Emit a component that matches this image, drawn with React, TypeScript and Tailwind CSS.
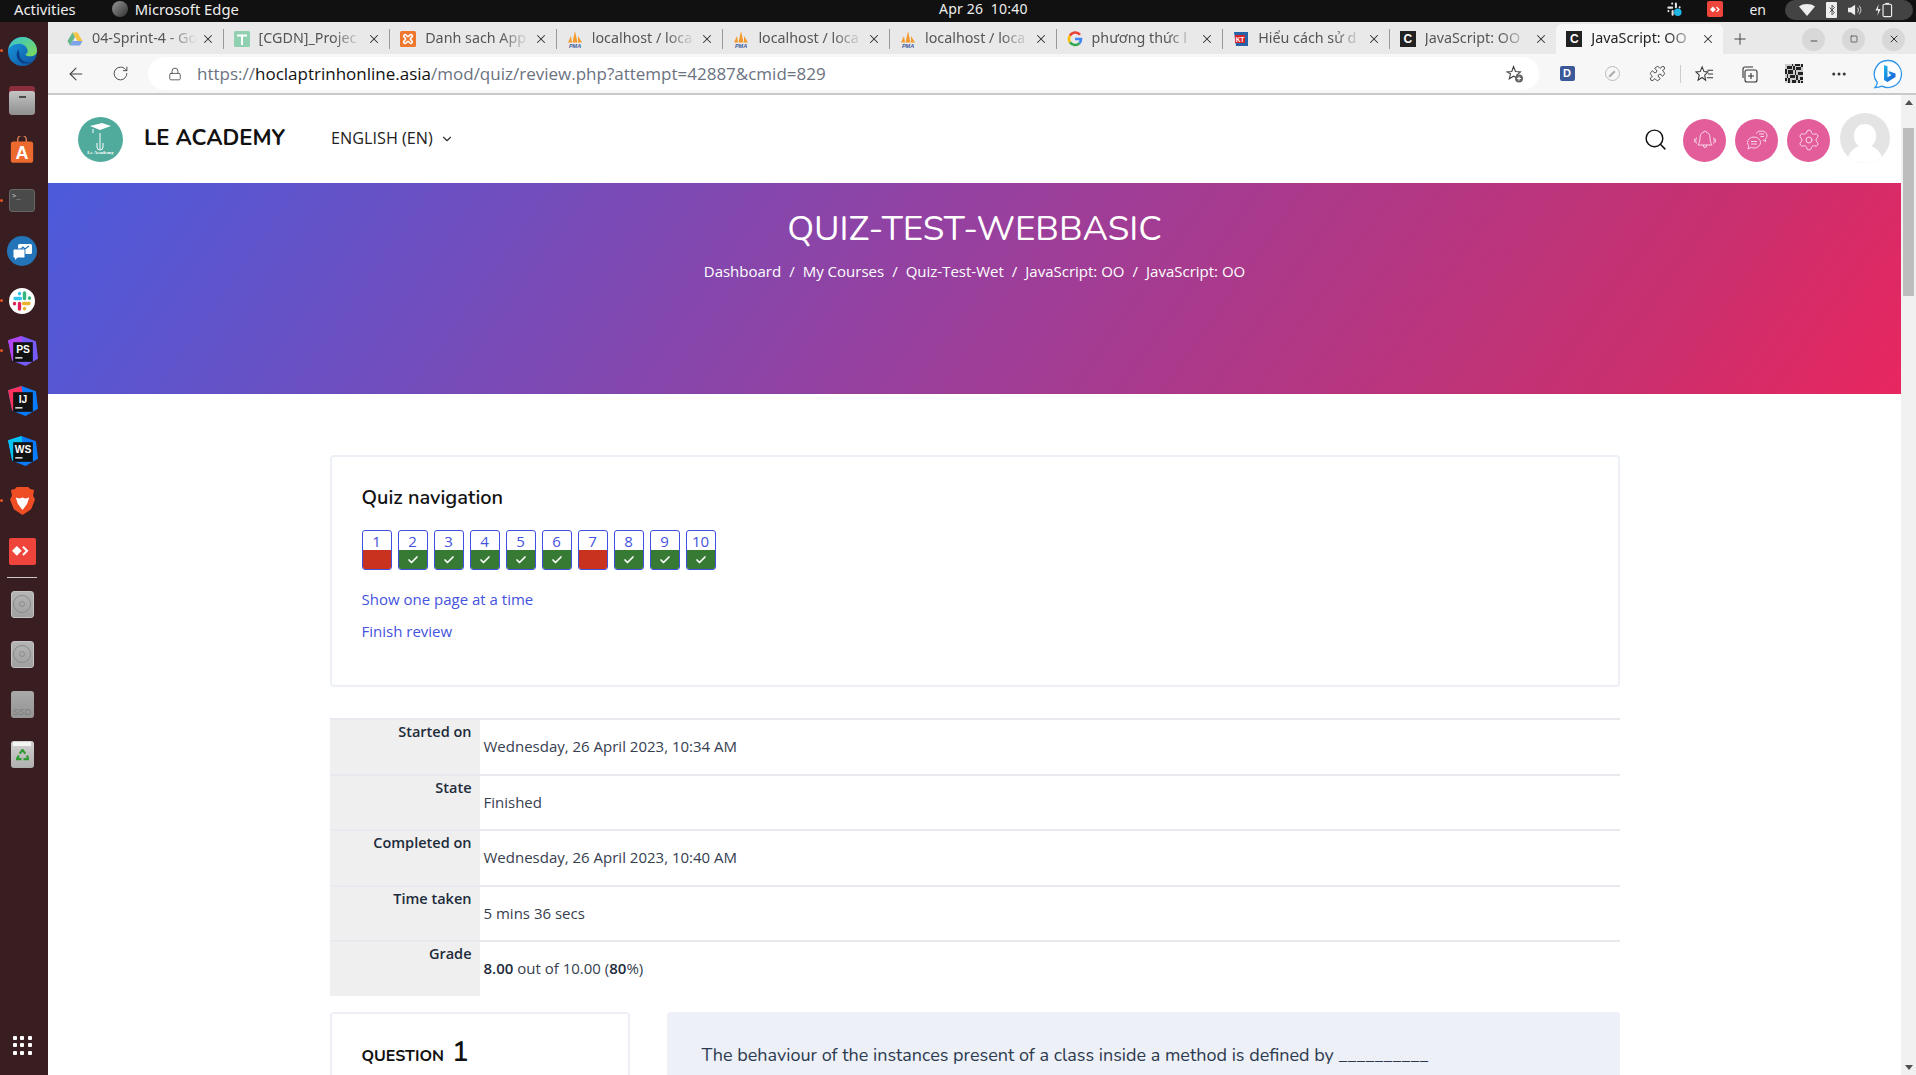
import {
  ArrowLeft,
  Check,
  ChevronDown,
  Ellipsis,
  Lock,
  Minus,
  Plus,
  Puzzle,
  RotateCw,
  Search,
  Settings,
  Square,
  X,
} from "lucide-react";
import type { ReactNode } from "react";

const heading = "font-['Nunito','Lato','Noto_Sans',sans-serif]";

/* ---------- favicons ---------- */
function DriveIcon() {
  return (
    <svg viewBox="0 0 16 16" className="w-4 h-4">
      <path d="M5.500 1.500h5L15.500 10h-5z" fill="#f4c542" />
      <path d="M5.500 1.500 0.500 10l2.500 4.500L8 6z" fill="#63b58a" />
      <path d="M3 14.500h10l2.500-4.500h-10z" fill="#7ba4ea" />
    </svg>
  );
}
function SheetIcon() {
  return (
    <svg viewBox="0 0 16 16" className="w-4 h-4">
      <rect x="0" y="0" width="16" height="16" rx="1.500" fill="#8fd0b0" />
      <path d="M3 4.500h10M8 4.500V14" stroke="#fff" strokeWidth="2" />
    </svg>
  );
}
function XamppIcon() {
  return (
    <svg viewBox="0 0 16 16" className="w-4 h-4" fill="none" stroke="#fff" strokeWidth="1.600">
      <rect width="16" height="16" rx="1.500" fill="#f0782e" stroke="none" />
      <path d="M5 3.500c1.500 0 1.500 2 3 2s1.500-2 3-2 2 2 .5 3-1.500 2 0 3 .5 3-.5 3-1.500-2-3-2-1.500 2-3 2-2-2-.5-3 1.500-2 0-3-.5-3 .5-3z" />
    </svg>
  );
}
function PmaIcon() {
  return (
    <svg viewBox="0 0 18 17" className="w-[18px] h-[17px]">
      <path d="M2 11.500 5 5l1 6.500zM6.500 11.500 9 0l2.500 11.500zM12 11.500V5l4 6.500z" fill="#f39a2c" />
      <text x="9" y="16.500" textAnchor="middle" fontSize="5.500" fontWeight="700" fontStyle="italic" fill="#3c5a9a" fontFamily="Liberation Sans">
        PMA
      </text>
    </svg>
  );
}
function GoogleIcon() {
  return (
    <svg viewBox="0 0 16 16" className="w-4 h-4" fill="none" strokeWidth="2.600">
      <path d="M13 3.700A6 6 0 0 0 3 4.700" stroke="#ea4335" />
      <path d="M3 4.700a6 6 0 0 0 0 6.600" stroke="#fbbc05" />
      <path d="M3 11.300a6 6 0 0 0 9.500.8" stroke="#34a853" />
      <path d="M8 8h6c0 1.700-.5 3-1.500 4.100" stroke="#4285f4" />
    </svg>
  );
}
function KtIcon() {
  return (
    <svg viewBox="0 0 16 16" className="w-4 h-4">
      <path d="M1 1h14v14H3z" fill="#2563a8" />
      <rect x="2" y="4" width="10" height="8" fill="#d8232a" />
      <text x="7" y="10.500" textAnchor="middle" fontSize="6.500" fontWeight="700" fill="#fff" fontFamily="Liberation Sans">
        KT
      </text>
    </svg>
  );
}
function CIcon() {
  return (
    <div className="w-4 h-4 bg-[#222] flex items-center justify-center text-white text-[12px] font-bold font-['Liberation_Sans',sans-serif] leading-none">
      C
    </div>
  );
}

/* ---------- dock ---------- */
function EdgeIcon() {
  return (
    <svg viewBox="0 0 32 32" className="w-[31px] h-[31px]">
      <defs>
        <linearGradient id="edgeA" x1="0" y1="0" x2="1" y2="1">
          <stop offset="0" stopColor="#37c6d0" />
          <stop offset="1" stopColor="#7ed957" />
        </linearGradient>
        <linearGradient id="edgeB" x1="0" y1="0" x2="1" y2="1">
          <stop offset="0" stopColor="#1b9de2" />
          <stop offset="1" stopColor="#0b4f9e" />
        </linearGradient>
      </defs>
      <circle cx="16" cy="16" r="15" fill="url(#edgeB)" />
      <path d="M1.500 14C3 5 10 1 16 1c9 0 15 7 15 14 0 4-3 6-7 6-3 0-5-1-5-2 2-1 3-3 2-5-1-4-5-6-9-6-5 0-9 3-11 6z" fill="url(#edgeA)" />
      <path d="M12 14c-3 3-3 9 2 13 3 2 8 2 11 0-6 1-11-2-12-7-.5-2-.5-4-1-6z" fill="#0c3f86" />
    </svg>
  );
}
function FilesIcon() {
  return (
    <div className="w-[26px] h-[29px] -mt-[2px] rounded-[3px] bg-[#8a2e3e] pt-[5px] overflow-hidden">
      <div className="h-full rounded-[3px] bg-gradient-to-b from-[#c4c4c4] to-[#8f8f8f] flex justify-center pt-[5px]">
        <div className="w-[7px] h-[2px] bg-[#4a4a4a]" />
      </div>
    </div>
  );
}
function StoreIcon() {
  return (
    <svg viewBox="0 0 28 32" className="w-[24px] h-[28px] -mt-[3px]">
      <path d="M9 7V4a5 5 0 0 1 10 0v3" stroke="#f08a5a" strokeWidth="1.500" fill="none" />
      <rect x="1" y="6" width="26" height="25" rx="3" fill="#ec6a2d" />
      <text x="14" y="26" textAnchor="middle" fontSize="21" fontWeight="700" fill="#fff" fontFamily="Liberation Sans">
        A
      </text>
    </svg>
  );
}
function TerminalIcon() {
  return (
    <div className="w-[26px] h-[23px] -mt-[2px] rounded-[3px] bg-[#4a4a4a] border border-[#666] text-[#ccc] text-[7px] leading-[9px] pl-[2px] pt-[2px] font-['DejaVu_Sans_Mono',monospace]">
      &gt;_
    </div>
  );
}
function MessengerIcon() {
  return (
    <svg viewBox="0 0 30 30" className="w-[30px] h-[30px]">
      <circle cx="15" cy="15" r="15" fill="#2374b8" />
      <rect x="11" y="8" width="14" height="10" rx="1.500" fill="#fff" />
      <path d="M13 14l3-3 2 2 4-3" stroke="#2374b8" strokeWidth="1.200" fill="none" />
      <rect x="6" y="13" width="12" height="9" rx="1.500" fill="#fff" stroke="#2374b8" />
      <path d="M8 21v3l3-3z" fill="#fff" />
    </svg>
  );
}
function SlackIcon() {
  return (
    <svg viewBox="0 0 26 26" className="w-[26px] h-[26px]">
      <circle cx="13" cy="13" r="13" fill="#fff" />
      <g strokeWidth="3.400" strokeLinecap="round">
        <path d="M6 10.500h5.500M10.500 5.500v.2" stroke="#36c5f0" />
        <path d="M15.500 5v5.500M20.500 10v.2" stroke="#2eb67d" />
        <path d="M14.500 15.500H20M15.500 20.500v.2" stroke="#ecb22e" />
        <path d="M10.500 15.500V21M5.500 15.500v.2" stroke="#e01e5a" />
      </g>
    </svg>
  );
}
function StatusSlackIcon() {
  return (
    <svg viewBox="0 0 16 16" className="w-[15px] h-[15px]">
      <g stroke="#e4e4e4" strokeWidth="2.200" strokeLinecap="round">
        <path d="M1.500 6h4M5.500 1.500v.2M9.500 1.500v4M13.500 5.500v.2M6 9.500v4M1.500 9.500v.2" />
      </g>
      <circle cx="11.500" cy="11" r="4" fill="#1fb6e6" />
    </svg>
  );
}
function JetBrainsIcon({ label, polyA, polyB }: { label: string; polyA: string; polyB: string }) {
  return (
    <svg viewBox="0 0 30 30" className="w-[31px] h-[31px]">
      <path d="M1 4 14 0 28 5 30 22 18 29 5 24z" fill={polyB} />
      <path d="M1 4 14 0 16 14 5 24z" fill={polyA} />
      <rect x="6" y="6" width="19" height="19" fill="#111" />
      <text x="15.500" y="16.500" textAnchor="middle" fontSize="10" fontWeight="700" fill="#fff" fontFamily="Liberation Sans">
        {label}
      </text>
      <rect x="8" y="20.500" width="7" height="1.300" fill="#fff" />
    </svg>
  );
}
function BraveIcon() {
  return (
    <svg viewBox="0 0 26 30" className="w-[25px] h-[29px] -mt-[1px]">
      <path d="M7 1h12l2 2 4 1-1 6 2 4-4 10-9 6-9-6L0 14l2-4-1-6 4-1z" fill="#ef4d23" />
      <path d="M6 12l4 1 3-1 3 1 4-1-2 6-2 3-3 4-3-4-2-3z" fill="#fff" />
    </svg>
  );
}
function AnydeskIcon({ size }: { size: string }) {
  return (
    <div className={`${size} rounded-[2px] bg-[#ef443b] flex items-center justify-center`}>
      <svg viewBox="0 0 20 12" className="w-[72%]">
        <path d="M0 6l5-5 5 5-5 5z" fill="#fff" />
        <path d="M12 1l5 5-5 5-1.500-1.500L14 6l-3.500-3.500z" fill="#fff" />
      </svg>
    </div>
  );
}
function DiskIcon() {
  return (
    <div className="w-[23px] h-[27px] rounded-[3px] bg-gradient-to-b from-[#b5b5b5] to-[#a0a0a0] border border-[#c4c4c4] flex items-center justify-center">
      <div className="w-[18px] h-[18px] rounded-full border border-[#8b8b8b] flex items-center justify-center">
        <div className="w-[6px] h-[6px] rounded-full border border-[#8b8b8b]" />
      </div>
    </div>
  );
}
function SsdIcon() {
  return (
    <div className="w-[23px] h-[27px] rounded-[3px] bg-gradient-to-b from-[#a9a9a9] to-[#959595] flex items-end justify-center text-[#7d7d7d] text-[9px] leading-[12px] font-['Liberation_Sans',sans-serif]">
      SSD
    </div>
  );
}
function TrashIcon() {
  return (
    <div className="w-[23px] h-[27px] rounded-[3px] bg-gradient-to-b from-[#d2d2d2] to-[#b0b0b0] flex flex-col items-center pt-[1px] gap-[3px]">
      <div className="w-[18px] h-[4px] bg-[#f4f4f4]" />
      <svg viewBox="0 0 14 14" className="w-[13px] h-[13px]" fill="none" stroke="#2f9a2f" strokeWidth="2.400">
        <path d="M4 5l3-4 3 4M12 7l1 4H8M6 11H1l2-4" />
      </svg>
    </div>
  );
}
function DockItem({ children, running }: { children: ReactNode; running?: boolean }) {
  return (
    <div className="relative h-[50px] w-[44px] flex items-center justify-center shrink-0">
      {running && <span className="absolute left-0 top-[23px] w-[3px] h-[3px] rounded-full bg-[#e95420]" />}
      {children}
    </div>
  );
}
function Dock() {
  return (
    <aside className="w-[48px] shrink-0 bg-[#391e21] flex flex-col pt-[4px]">
      <DockItem running><EdgeIcon /></DockItem>
      <DockItem><FilesIcon /></DockItem>
      <DockItem><StoreIcon /></DockItem>
      <DockItem running><TerminalIcon /></DockItem>
      <DockItem><MessengerIcon /></DockItem>
      <DockItem running><SlackIcon /></DockItem>
      <DockItem running><JetBrainsIcon label="PS" polyA="#b345f1" polyB="#765af8" /></DockItem>
      <DockItem><JetBrainsIcon label="IJ" polyA="#fe315d" polyB="#087cfa" /></DockItem>
      <DockItem><JetBrainsIcon label="WS" polyA="#07c3f2" polyB="#087cfa" /></DockItem>
      <DockItem running><BraveIcon /></DockItem>
      <DockItem><AnydeskIcon size="w-[27px] h-[27px]" /></DockItem>
      <div className="w-[30px] h-px bg-[#cfc8c8] ml-[7px] my-[1px] shrink-0" />
      <DockItem><DiskIcon /></DockItem>
      <DockItem><DiskIcon /></DockItem>
      <DockItem><SsdIcon /></DockItem>
      <DockItem><TrashIcon /></DockItem>
      <div className="mt-auto mb-[5px] h-[50px] w-[44px] flex items-center justify-center shrink-0">
        <div className="grid grid-cols-3 gap-[3.500px]">
          {Array.from({ length: 9 }).map((_, i) => (
            <div key={i} className="w-[4px] h-[4px] bg-white rounded-[1px]" />
          ))}
        </div>
      </div>
    </aside>
  );
}

/* ---------- top bar ---------- */
function TopBar() {
  return (
    <div className="h-[22px] shrink-0 bg-[#111] text-[#eee] text-[14.800px] font-['Noto_Sans',sans-serif] flex items-start relative">
      <span className="ml-[14px] leading-[19px]">Activities</span>
      <span className="ml-[36px] mt-[1px] w-[16px] h-[16px] rounded-full bg-gradient-to-br from-[#999] to-[#333]" />
      <span className="ml-[7px] leading-[19px]">Microsoft Edge</span>
      <span className="absolute left-[939px] top-0 text-[14px] leading-[18px] tracking-[0.2px]">Apr 26&nbsp; 10:40</span>
      <div className="ml-auto flex items-start">
        <div className="mt-[2px] mr-[25px]">
          <StatusSlackIcon />
        </div>
        <div className="mt-[1px]">
          <AnydeskIcon size="w-[16px] h-[16px]" />
        </div>
        <span className="ml-[26px] mr-[19px] text-[14px] leading-[19px]">en</span>
        <div className="w-[128px] h-[20px] rounded-full bg-[#434343] flex items-center pl-[14px] mr-[3px]">
          <svg viewBox="0 0 16 12" className="w-[16px] h-[12px]">
            <path d="M0 2.500C4-.8 12-.8 16 2.500L8 12z" fill="#eee" />
          </svg>
          <div className="ml-[11px] w-[11px] h-[16px] rounded-[1px] bg-[#eee] flex items-center justify-center">
            <svg viewBox="0 0 10 14" className="w-[8px] h-[12px]" fill="none" stroke="#333" strokeWidth="1">
              <path d="M2 4l6 6-3 3V1l3 3-6 6" />
            </svg>
          </div>
          <svg viewBox="0 0 18 14" className="ml-[11px] w-[16px] h-[14px]">
            <path d="M0 4.500h3L8 1v12L3 9.500H0z" fill="#eee" />
            <path d="M10.500 4.500a3 3 0 0 1 0 5M12.500 2.500a6 6 0 0 1 0 9" stroke="#bbb" strokeWidth="1.200" fill="none" />
          </svg>
          <svg viewBox="0 0 20 16" className="ml-[10px] w-[19px] h-[16px]" fill="none">
            <path d="M5 2 1.500 8.500h3L3.500 14l3.500-7H4z" fill="#eee" />
            <rect x="9.500" y="2" width="9" height="13" rx="1.500" stroke="#eee" strokeWidth="1.200" />
            <rect x="12" y="0.500" width="4" height="1.500" fill="#eee" />
          </svg>
        </div>
      </div>
    </div>
  );
}

/* ---------- browser tabs ---------- */
const tabs: { icon: ReactNode; title: string }[] = [
  { icon: <DriveIcon />, title: "04-Sprint-4 - Go" },
  { icon: <SheetIcon />, title: "[CGDN]_Projec" },
  { icon: <XamppIcon />, title: "Danh sach App" },
  { icon: <PmaIcon />, title: "localhost / loca" },
  { icon: <PmaIcon />, title: "localhost / loca" },
  { icon: <PmaIcon />, title: "localhost / loca" },
  { icon: <GoogleIcon />, title: "phương thức l" },
  { icon: <KtIcon />, title: "Hiểu cách sử d" },
  { icon: <CIcon />, title: "JavaScript: OO" },
];

function Tab({ icon, title, active, last }: { icon: ReactNode; title: string; active?: boolean; last?: boolean }) {
  return (
    <div
      className={`h-full w-[166.600px] shrink-0 flex items-center pl-[9px] pr-[8px] ${
        active
          ? "bg-[#f7f7f7] rounded-t-[6px] text-[#222]"
          : `text-[#555] ${last ? "" : "border-r border-[#b5b5b5] [border-image:linear-gradient(to_bottom,transparent_20%,#999_20%,#999_80%,transparent_80%)_1]"}`
      }`}
    >
      <span className="w-[18px] flex justify-center shrink-0">{icon}</span>
      <span className="ml-[8px] -mt-[2px] flex-1 min-w-0 overflow-hidden whitespace-nowrap text-[14.300px] [mask-image:linear-gradient(to_right,black_70%,transparent_98%)]">
        {title}
      </span>
      <X size={14} strokeWidth={1.800} className="shrink-0 ml-[2px] text-[#333]" />
    </div>
  );
}

function TabStrip() {
  return (
    <div className="h-[32px] shrink-0 bg-[#e9e9e9] flex items-stretch pl-[9px] pt-[2px] font-['Noto_Sans',sans-serif]">
      {tabs.map((t, i) => (
        <Tab key={i} icon={t.icon} title={t.title} last={i === 8} />
      ))}
      <Tab icon={<CIcon />} title="JavaScript: OO" active />
      <div className="w-[34px] flex items-center justify-center text-[#333]">
        <Plus size={18} strokeWidth={1.200} />
      </div>
      <div className="ml-auto flex items-center gap-[17px] pr-[11px]">
        <div className="w-[23px] h-[23px] rounded-full bg-[#d8d8d8] flex items-center justify-center text-[#333]">
          <Minus size={10} className="mt-[3px]" />
        </div>
        <div className="w-[23px] h-[23px] rounded-full bg-[#d8d8d8] flex items-center justify-center text-[#333]">
          <Square size={8} />
        </div>
        <div className="w-[23px] h-[23px] rounded-full bg-[#d8d8d8] flex items-center justify-center text-[#333]">
          <X size={12} />
        </div>
      </div>
    </div>
  );
}

/* ---------- toolbar ---------- */
function ToolBtn({ children }: { children: ReactNode }) {
  return <div className="w-[45px] flex items-center justify-center shrink-0">{children}</div>;
}

const qrCells = Array.from({ length: 132 }, (_, i) => (i * i * 7 + i * 13) % 17 > 6);

function Toolbar() {
  return (
    <div className="h-[41px] shrink-0 bg-[#f7f7f7] border-b-2 border-[#c9c9c9] flex items-center pl-[6px]">
      <div className="w-[44px] flex justify-center text-[#444]">
        <ArrowLeft size={20} strokeWidth={1.300} />
      </div>
      <div className="w-[44px] flex justify-center text-[#444]">
        <RotateCw size={17} strokeWidth={1.300} />
      </div>
      <div className="ml-[6px] w-[1391px] h-[33px] rounded-full bg-white flex items-center pl-[20px] pr-[15px] font-['Open_Sans',sans-serif] text-[17px] text-[#6b7280]">
        <Lock size={14} strokeWidth={1.400} className="text-[#444] shrink-0" />
        <span className="ml-[15px]">
          https://<span className="text-[#111]">hoclaptrinhonline.asia</span>/mod/quiz/review.php?attempt=42887&amp;cmid=829
        </span>
        <svg viewBox="0 0 18 18" className="ml-auto w-[18px] h-[18px]" fill="none" stroke="#444" strokeWidth="1.100">
          <path d="M7.500 1.500 9.500 6.500l5 .4-3.800 3.300 1 3-4.200-2-4.200 2.600 1.200-5L.8 6.900l5-.4z" />
          <circle cx="13" cy="13.500" r="4" fill="#666" stroke="none" />
          <path d="M13 11.500v4M11 13.500h4" stroke="#fff" />
        </svg>
      </div>
      <div className="flex items-center ml-[5.500px]">
        <ToolBtn>
          <div className="w-[15px] h-[15px] rounded-[2px] bg-[#3b5998] text-white text-[11px] font-bold flex items-center justify-center font-['Liberation_Sans',sans-serif]">
            D
          </div>
        </ToolBtn>
        <ToolBtn>
          <div className="w-[15px] h-[15px] rounded-full border border-[#bbb] flex items-center justify-center">
            <div className="w-[8px] h-[2px] bg-[#aaa] -rotate-45" />
          </div>
        </ToolBtn>
        <ToolBtn><Puzzle size={17} strokeWidth={1.200} className="text-[#333]" /></ToolBtn>
        <div className="w-px h-[18px] bg-[#ccc] mr-[1px]" />
        <ToolBtn>
          <svg viewBox="0 0 20 18" className="w-[19px] h-[18px]" fill="none" stroke="#333" strokeWidth="1.100">
            <path d="M7.500 1.500 9.500 6.500l4 .4-3.300 3.300 1 5.300-3.700-2.800-4.200 2.800 1.200-5.300L1 6.900l4.500-.4zM13 5h6M13.500 9h5.500M12.500 13h6.500" />
          </svg>
        </ToolBtn>
        <ToolBtn>
          <svg viewBox="0 0 18 18" className="w-[18px] h-[18px]" fill="none" stroke="#333" strokeWidth="1.100">
            <rect x="5" y="5" width="12" height="12" rx="2" />
            <path d="M11 8v6M8 11h6M3 13V4a2 2 0 0 1 2-2h8" />
          </svg>
        </ToolBtn>
        <ToolBtn>
          <div className="w-[18px] h-[19px] grid grid-cols-[repeat(11,1fr)] grid-rows-[repeat(12,1fr)] bg-[#ddd]">
            {qrCells.map((on, i) => (
              <div key={i} className={on ? "bg-[#222]" : "bg-[#ccc]"} />
            ))}
          </div>
        </ToolBtn>
        <ToolBtn><Ellipsis size={18} className="text-[#333]" /></ToolBtn>
        <div className="w-[45px] ml-[4px] flex items-center justify-center shrink-0">
          <svg viewBox="0 0 30 30" className="w-[30px] h-[30px]">
            <defs>
              <linearGradient id="bingB" x1="0" y1="0" x2="1" y2="1">
                <stop offset="0" stopColor="#1eb6e8" />
                <stop offset="1" stopColor="#1559d6" />
              </linearGradient>
            </defs>
            <path d="M15 1.500a13.500 13.500 0 1 1-6 25.600c-2 .9-4 1.400-7 1.400 1.500-1.500 2.200-3 2.300-5A13.500 13.500 0 0 1 15 1.500z" fill="#fff" stroke="#2f96ea" strokeWidth="1.300" />
            <path d="M11 6l3.500 1.300v11l4-2.300-2-1-1-3 7 2.600v3.400L14.500 23 11 21z" fill="url(#bingB)" />
          </svg>
        </div>
      </div>
    </div>
  );
}

/* ---------- site ---------- */
function Logo() {
  return (
    <svg viewBox="0 0 45 45" className="w-[45px] h-[45px]">
      <circle cx="22.500" cy="22.500" r="22.500" fill="#50ab9c" />
      <path d="M12 9l12-3 9 3-11 4z" fill="#fff" />
      <path d="M15 12v4M22 16v16M19 26v4a3 3 0 0 0 6 0v-4" stroke="#fff" strokeWidth="1" fill="none" />
      <text x="22.500" y="37" textAnchor="middle" fontSize="5" fontWeight="700" fill="#fff" fontFamily="Liberation Serif">
        Le Academy
      </text>
    </svg>
  );
}

function RoundBtn({ children }: { children: ReactNode }) {
  return (
    <div className="w-[43px] h-[43px] rounded-full bg-[#e35d9b] flex items-center justify-center text-[#fbe3ef]">
      {children}
    </div>
  );
}

function SiteHeader() {
  return (
    <header className="h-[88px] shrink-0 bg-white flex items-center pl-[30px] pr-[11px]">
      <Logo />
      <span className={`ml-[21px] -mt-[2px] text-[22px] font-bold text-[#111] ${heading}`}>LE ACADEMY</span>
      <span className="ml-[46px] -mt-[1px] text-[16.200px] text-[#222] font-['Open_Sans',sans-serif]">ENGLISH (EN)</span>
      <ChevronDown size={14} className="ml-[7px] text-[#333]" />
      <div className="ml-auto flex items-center">
        <Search size={25} strokeWidth={1.400} className="text-[#111] mr-[15px]" />
        <div className="flex items-center gap-[9px] mt-[2px]">
          <RoundBtn>
            <svg viewBox="0 0 24 24" className="w-[24px] h-[24px]" fill="none" stroke="currentColor" strokeWidth="0.900">
              <path d="M12 3a1 1 0 0 1 1 1c3 .7 4 3 4 6 0 3 .8 5 2 7H5c1.200-2 2-4 2-7 0-3 1-5.300 4-6a1 1 0 0 1 1-1zM10.500 17v1a1.500 1.500 0 0 0 3 0v-1" />
              <path d="M3.500 9.500c-1 2-1 4 0 6M1.800 10.500c-.5 1.300-.5 2.700 0 4M20.500 9.500c1 2 1 4 0 6M22.200 10.500c.5 1.300.5 2.700 0 4" />
            </svg>
          </RoundBtn>
          <RoundBtn>
            <svg viewBox="0 0 24 24" className="w-[24px] h-[24px]" fill="none" stroke="currentColor" strokeWidth="0.900">
              <path d="M11 5.500a5.500 5 0 0 1 5.500-2.500c3 0 5.500 2 5.500 4.500 0 1.500-.8 2.800-2 3.600l.8 2.400-3-1.400" />
              <path d="M9 9a6.500 5.500 0 0 1 6.500 5.500A6.500 5.500 0 0 1 9 20c-1 0-2-.2-2.800-.6L3 21l.8-3.200A5.300 5.300 0 0 1 2.500 14.500 6.500 5.500 0 0 1 9 9z" />
              <path d="M6 13.500h6M6 16h6M14 6h5M15.500 8.500H19" />
            </svg>
          </RoundBtn>
          <RoundBtn><Settings size={24} strokeWidth={0.900} /></RoundBtn>
        </div>
        <div className="ml-[10px] w-[50px] h-[50px] rounded-full bg-[#e4e4e4] overflow-hidden flex flex-col items-center pt-[11px] -mt-[3px]">
          <div className="w-[22px] h-[24px] rounded-full bg-white shrink-0" />
          <div className="w-[36px] h-[24px] rounded-t-full bg-white -mt-[3px] shrink-0" />
        </div>
      </div>
    </header>
  );
}

function Banner() {
  const crumbs = ["Dashboard", "My Courses", "Quiz-Test-Wet", "JavaScript: OO", "JavaScript: OO"];
  return (
    <section className="h-[211px] shrink-0 bg-[linear-gradient(125deg,#4c5bdc_0%,#9a3f9c_50%,#c8306f_85%,#e8265f_100%)] flex flex-col items-center text-white pt-[24px]">
      <h1 className={`text-[35px] leading-[44px] font-normal ${heading}`}>QUIZ-TEST-WEBBASIC</h1>
      <div className="mt-[9.500px] flex items-center text-[15px] leading-[20px] font-['Open_Sans',sans-serif]">
        {crumbs.map((c, i) => (
          <span key={i} className="flex items-center">
            {i > 0 && <span className="mx-[8px]">/</span>}
            {c}
          </span>
        ))}
      </div>
    </section>
  );
}

function NavTile({ n, correct }: { n: number; correct: boolean }) {
  return (
    <div className="w-[30px] h-[40px] rounded-[3px] border border-[#3f51e0] overflow-hidden flex flex-col bg-white">
      <div className="h-[19px] text-center text-[15px] leading-[20px] text-[#4453e0] font-['Open_Sans',sans-serif]">{n}</div>
      <div className={`flex-1 flex items-center justify-center ${correct ? "bg-[#367a33]" : "bg-[#c9321f]"}`}>
        {correct && <Check size={12} strokeWidth={3.500} className="text-white" />}
      </div>
    </div>
  );
}

function QuizNav() {
  const wrong = [1, 7];
  return (
    <div className="h-[232px] border-2 border-[#edf0f7] rounded-[4px] px-[30px] pt-[26px]">
      <h3 className={`text-[20px] leading-[30px] font-semibold text-[#111] ${heading}`}>Quiz navigation</h3>
      <div className="mt-[17px] flex gap-[6px]">
        {Array.from({ length: 10 }).map((_, i) => (
          <NavTile key={i} n={i + 1} correct={!wrong.includes(i + 1)} />
        ))}
      </div>
      <div className="mt-[18px] text-[15px] leading-[22px] text-[#4453e0] font-['Open_Sans',sans-serif]">Show one page at a time</div>
      <div className="mt-[10px] text-[15px] leading-[22px] text-[#4453e0] font-['Open_Sans',sans-serif]">Finish review</div>
    </div>
  );
}

function SummaryRow({ label, children }: { label: string; children: ReactNode }) {
  return (
    <div className="flex h-[55.500px] border-t-2 border-[#e8e9ee]">
      <div className="w-[150px] shrink-0 bg-[#efefef] text-right pr-[8px] text-[14.500px] leading-[24px] font-semibold text-[#1d2b3a]">
        {label}
      </div>
      <div className="pl-[4px] pt-[15px] text-[15px] leading-[22px] text-[#36404f]">{children}</div>
    </div>
  );
}

function Summary() {
  return (
    <div className="mt-[31px] font-['Open_Sans',sans-serif]">
      <SummaryRow label="Started on">Wednesday, 26 April 2023, 10:34 AM</SummaryRow>
      <SummaryRow label="State">Finished</SummaryRow>
      <SummaryRow label="Completed on">Wednesday, 26 April 2023, 10:40 AM</SummaryRow>
      <SummaryRow label="Time taken">5 mins 36 secs</SummaryRow>
      <SummaryRow label="Grade">
        <b className="font-semibold text-[#1d2b3a]">8.00</b> out of 10.00 (<b className="font-semibold text-[#1d2b3a]">80</b>%)
      </SummaryRow>
    </div>
  );
}

function Question() {
  return (
    <div className="mt-[16px] flex gap-[37px] items-start">
      <div className={`w-[300px] h-[200px] shrink-0 border-2 border-[#edf0f7] rounded-[4px] pl-[30px] pt-[17px] flex items-baseline ${heading}`}>
        <span className="text-[16px] font-bold text-[#111]">QUESTION</span>
        <span className="ml-[8px] text-[28px] font-semibold text-[#111]">1</span>
      </div>
      <div className={`flex-1 h-[200px] bg-[#edf0f7] rounded-[4px] pl-[35px] pt-[30px] text-[18px] leading-[26px] text-[#2c3a4f] ${heading}`}>
        The behaviour of the instances present of a class inside a method is defined by __________
      </div>
    </div>
  );
}

export default function App() {
  return (
    <div className="w-[1916px] h-[1075px] overflow-hidden flex flex-col bg-white">
      <TopBar />
      <div className="flex-1 flex min-h-0">
        <Dock />
        <div className="flex-1 min-w-0 flex flex-col">
          <TabStrip />
          <Toolbar />
          <div className="flex-1 flex min-h-0">
            <main className="flex-1 min-w-0 overflow-hidden flex flex-col">
              <SiteHeader />
              <Banner />
              <div className="w-[1290px] mx-auto pt-[61px]">
                <QuizNav />
                <Summary />
                <Question />
              </div>
            </main>
            <div className="w-[15px] shrink-0 bg-[#f1f1f1] flex flex-col items-center pt-[5px]">
              <div className="w-0 h-0 border-x-[4px] border-x-transparent border-b-[5px] border-b-[#505050]" />
              <div className="mt-[23px] w-[11px] h-[168px] bg-[#bdbdbd]" />
              <div className="mt-auto mb-[5px] w-0 h-0 border-x-[4px] border-x-transparent border-t-[5px] border-t-[#505050]" />
            </div>
          </div>
        </div>
      </div>
    </div>
  );
}
